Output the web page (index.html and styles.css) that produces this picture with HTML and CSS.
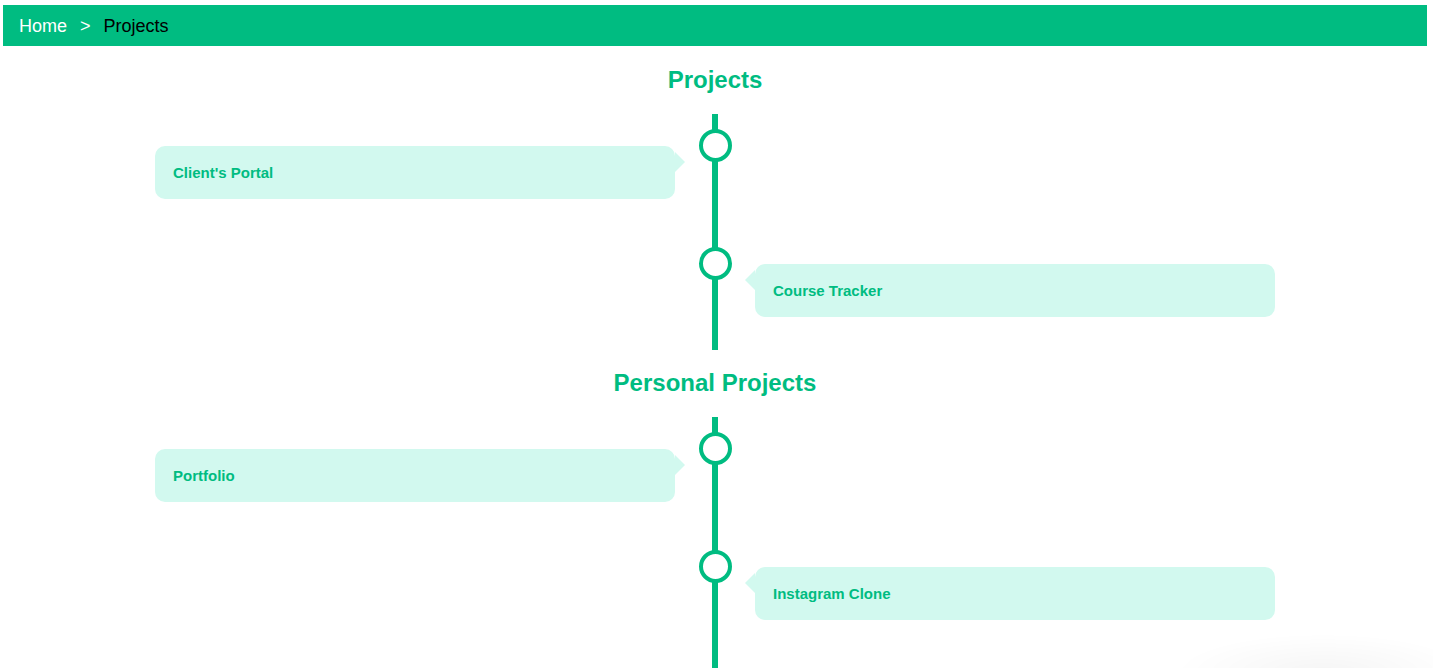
FILE: index.html
```html
<!DOCTYPE html>
<html lang="en">
<head>
    <meta charset="UTF-8">
    <meta name="viewport" content="width=device-width, initial-scale=1.0">
    <title>Projects</title>
    <link rel="stylesheet" href="styles.css">
</head>
<body>
    <nav class="breadcrumb">
        <a href="#" class="crumb-link">Home</a>
        <span class="crumb-sep">&gt;</span>
        <span class="crumb-current">Projects</span>
    </nav>

    <h2 class="section-title first">Projects</h2>
    <div class="timeline">
        <div class="item left">
            <div class="content">Client's Portal</div>
        </div>
        <div class="item right">
            <div class="content">Course Tracker</div>
        </div>
    </div>

    <h2 class="section-title">Personal Projects</h2>
    <div class="timeline last">
        <div class="item left">
            <div class="content">Portfolio</div>
        </div>
        <div class="item right">
            <div class="content">Instagram Clone</div>
        </div>
    </div>

    <div class="corner-glow"></div>
</body>
</html>
```

FILE: styles.css
```css
body {
    margin: 5px 6px 0 3px;
    font-family: "Liberation Sans", Arial, sans-serif;
    background: #ffffff;
    overflow: hidden;
}

.breadcrumb {
    height: 41px;
    background: #00bc81;
    display: flex;
    align-items: center;
    padding-left: 16px;
    padding-top: 1px;
    box-sizing: border-box;
    font-size: 18px;
}

.crumb-link {
    color: #ffffff;
    text-decoration: none;
}

.crumb-sep {
    color: #ffffff;
    margin: 0 13px;
}

.crumb-current {
    color: #000000;
}

.section-title {
    margin: 0;
    padding: 19px 0 20px;
    line-height: 28px;
    font-size: 24px;
    font-weight: bold;
    text-align: center;
    color: #00bc81;
}

.section-title.first {
    padding-top: 20px;
}

/* タイムライン */
.timeline {
    position: relative;
    max-width: 1200px;
    margin: 0 auto;
}

.timeline::before {
    content: "";
    position: absolute;
    top: 0;
    bottom: 0;
    left: calc(50% - 3px);
    width: 6px;
    background: #00bc81;
}

.timeline.last {
    padding-bottom: 40px;
}

.item {
    position: relative;
    width: 50%;
    box-sizing: border-box;
    padding: 32px 40px 33px;
}

.item.right {
    margin-left: 50%;
}

.item::after {
    content: "";
    position: absolute;
    top: 15px;
    width: 25px;
    height: 25px;
    background: #ffffff;
    border: 4px solid #00bc81;
    border-radius: 50%;
    z-index: 1;
}

.item.left::after {
    right: -16.5px;
}

.item.right::after {
    left: -16.5px;
}

/* 吹き出しの三角 */
.item::before {
    content: "";
    position: absolute;
    top: 38px;
    width: 0;
    height: 0;
    border: 10px solid transparent;
}

.item.left::before {
    right: 30px;
    border-right-width: 0;
    border-left-color: #d2f9ef;
}

.item.right::before {
    left: 30px;
    border-left-width: 0;
    border-right-color: #d2f9ef;
}

.content {
    background: #d2f9ef;
    color: #00bc81;
    border-radius: 10px;
    padding: 18px 18px 17px;
    font-size: 15px;
    line-height: 18px;
    font-weight: bold;
}

.corner-glow {
    position: fixed;
    right: -40px;
    bottom: -45px;
    width: 300px;
    height: 80px;
    border-radius: 50%;
    background: radial-gradient(ellipse at center, rgba(0, 0, 0, 0.04), rgba(0, 0, 0, 0) 70%);
    pointer-events: none;
}
```
